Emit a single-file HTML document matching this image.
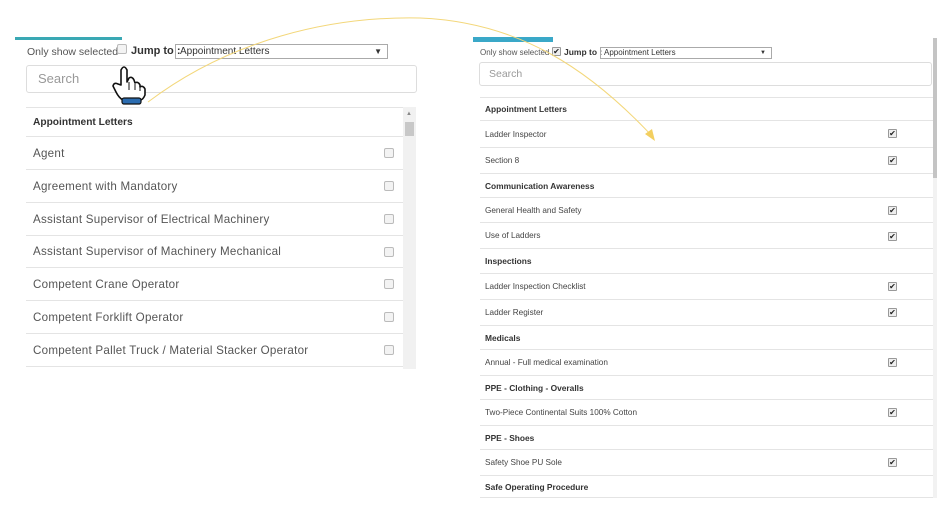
<!DOCTYPE html>
<html><head><meta charset="utf-8"><style>
*{margin:0;padding:0;box-sizing:border-box}
body{width:949px;height:513px;background:#fff;position:relative;overflow:hidden;font-family:"Liberation Sans",Arial,sans-serif;color:#333}
.a{position:absolute;white-space:nowrap}
.row{position:absolute;border-top:1px solid #e4e4e4;display:flex;align-items:center;white-space:nowrap}
.L{font-size:11.6px;letter-spacing:0.25px;color:#555;padding-left:7px}
.R{font-size:8.2px;color:#444;padding-left:5px}
.RH{font-size:8.4px;font-weight:bold;color:#333;padding-left:5px}
.cb{position:absolute;width:10px;height:10px;border:1px solid #bbb;border-radius:2px;background:#f3f3f3}
.ck{position:absolute;width:9px;height:9px;border:1px solid #999;border-radius:1px;background:#eee;font-size:8px;line-height:7px;text-align:center;color:#222;letter-spacing:0}
</style></head><body>
<!-- LEFT -->
<div class="a" style="left:15px;top:37px;width:107px;height:3px;background:#3aa8b4"></div>
<div class="a" style="left:27px;top:46px;font-size:10.5px;color:#555">Only show selected</div>
<div class="cb" style="left:117px;top:44px"></div>
<div class="a" style="left:131px;top:45px;font-size:11px;font-weight:bold;color:#333">Jump to :</div>
<div class="a" style="left:175px;top:44px;width:213px;height:15px;border:1px solid #aaa;font-size:10px;padding-left:4px;line-height:13px;color:#333">Appointment Letters<span style="position:absolute;right:5px;font-size:8px">▼</span></div>
<div class="a" style="left:26px;top:65px;width:391px;height:28px;border:1px solid #ddd;border-radius:3px;font-size:13px;color:#999;padding:5px 11px">Search</div>
<div class="a" style="left:26px;top:107px;width:377px;height:260px;border-bottom:1px solid #e4e4e4"></div>
<div class="a" style="left:403px;top:107px;width:13px;height:262px;background:#f1f1f1"></div>
<div class="a" style="left:405px;top:122px;width:9px;height:14px;background:#c8c8c8"></div>
<div class="a" style="left:406px;top:111px;font-size:6px;color:#888">▲</div>
<div class="row" style="left:26px;top:107px;width:377px;height:29px;font-size:10.2px;font-weight:bold;padding-left:7px;color:#333">Appointment Letters</div>
<div class="row L" style="left:26px;top:136px;width:377px;height:33px">Agent<span class="cb" style="left:358px;top:11px"></span></div>
<div class="row L" style="left:26px;top:169px;width:377px;height:33px">Agreement with Mandatory<span class="cb" style="left:358px;top:11px"></span></div>
<div class="row L" style="left:26px;top:202px;width:377px;height:33px">Assistant Supervisor of Electrical Machinery<span class="cb" style="left:358px;top:11px"></span></div>
<div class="row L" style="left:26px;top:235px;width:377px;height:32px">Assistant Supervisor of Machinery Mechanical<span class="cb" style="left:358px;top:11px"></span></div>
<div class="row L" style="left:26px;top:267px;width:377px;height:33px">Competent Crane Operator<span class="cb" style="left:358px;top:11px"></span></div>
<div class="row L" style="left:26px;top:300px;width:377px;height:33px">Competent Forklift Operator<span class="cb" style="left:358px;top:11px"></span></div>
<div class="row L" style="left:26px;top:333px;width:377px;height:33px">Competent Pallet Truck / Material Stacker Operator<span class="cb" style="left:358px;top:11px"></span></div>
<!-- RIGHT -->
<div class="a" style="left:473px;top:37px;width:80px;height:5px;background:#3aa8c8"></div>
<div class="a" style="left:480px;top:48px;font-size:8px;color:#555">Only show selected</div>
<div class="ck" style="left:552px;top:47px">✔</div>
<div class="a" style="left:564px;top:47px;font-size:8.5px;font-weight:bold;color:#333">Jump to :</div>
<div class="a" style="left:600px;top:47px;width:172px;height:12px;border:1px solid #aaa;font-size:8px;padding-left:3px;line-height:10px">Appointment Letters<span style="position:absolute;right:5px;font-size:6px">▼</span></div>
<div class="a" style="left:479px;top:62px;width:453px;height:24px;border:1px solid #ddd;border-radius:3px;font-size:10.5px;color:#999;padding:5px 9px">Search</div>
<div class="a" style="left:933px;top:38px;width:4px;height:140px;background:#c4c4c4"></div>
<div class="a" style="left:933px;top:178px;width:4px;height:320px;background:#f2f2f2"></div>
<div class="a" style="left:480px;top:497px;width:453px;border-top:1px solid #e4e4e4"></div>
<div class="row RH" style="left:480px;top:97px;width:453px;height:23px">Appointment Letters</div>
<div class="row R" style="left:480px;top:120px;width:453px;height:27px">Ladder Inspector<span class="ck" style="left:408px;top:8px">✔</span></div>
<div class="row R" style="left:480px;top:147px;width:453px;height:26px">Section 8<span class="ck" style="left:408px;top:8px">✔</span></div>
<div class="row RH" style="left:480px;top:173px;width:453px;height:24px">Communication Awareness</div>
<div class="row R" style="left:480px;top:197px;width:453px;height:25px">General Health and Safety<span class="ck" style="left:408px;top:8px">✔</span></div>
<div class="row R" style="left:480px;top:222px;width:453px;height:26px">Use of Ladders<span class="ck" style="left:408px;top:9px">✔</span></div>
<div class="row RH" style="left:480px;top:248px;width:453px;height:25px">Inspections</div>
<div class="row R" style="left:480px;top:273px;width:453px;height:26px">Ladder Inspection Checklist<span class="ck" style="left:408px;top:8px">✔</span></div>
<div class="row R" style="left:480px;top:299px;width:453px;height:26px">Ladder Register<span class="ck" style="left:408px;top:8px">✔</span></div>
<div class="row RH" style="left:480px;top:325px;width:453px;height:24px">Medicals</div>
<div class="row R" style="left:480px;top:349px;width:453px;height:26px">Annual - Full medical examination<span class="ck" style="left:408px;top:8px">✔</span></div>
<div class="row RH" style="left:480px;top:375px;width:453px;height:24px">PPE - Clothing - Overalls</div>
<div class="row R" style="left:480px;top:399px;width:453px;height:26px">Two-Piece Continental Suits 100% Cotton<span class="ck" style="left:408px;top:8px">✔</span></div>
<div class="row RH" style="left:480px;top:425px;width:453px;height:24px">PPE - Shoes</div>
<div class="row R" style="left:480px;top:449px;width:453px;height:26px">Safety Shoe PU Sole<span class="ck" style="left:408px;top:8px">✔</span></div>
<div class="row RH" style="left:480px;top:475px;width:453px;height:23px">Safe Operating Procedure</div>
<!-- arrow + hand -->
<svg class="a" style="left:0;top:0" width="949" height="513">
<path d="M148,102 C230,40 330,16 420,18 C520,22 590,70 652,136" fill="none" stroke="#f3d77a" stroke-width="1"/>
<path d="M645,134 L655,141 L652,129 Z" fill="#f3cf60"/>
<path d="M121,85 L121,70 Q124,64 127,70 L127,82 L129,78 Q132,76 134,80 L135,83 Q138,81 140,85 L140,87 Q143,85 145,89 L145,95 Q143,100 140,100 L123,100 Q119,98 116,92 L113,86 Q114,82 118,84 Z" fill="#fff" stroke="#111" stroke-width="1.6" stroke-linejoin="round"/>
<path d="M129,82 L129,90 M135,84 L135,90 M140,87 L140,91" stroke="#111" stroke-width="1"/>
<rect x="122" y="98" width="19" height="6" rx="2" fill="#2b6cb0" stroke="#111" stroke-width="1.2"/>
</svg>
</body></html>
